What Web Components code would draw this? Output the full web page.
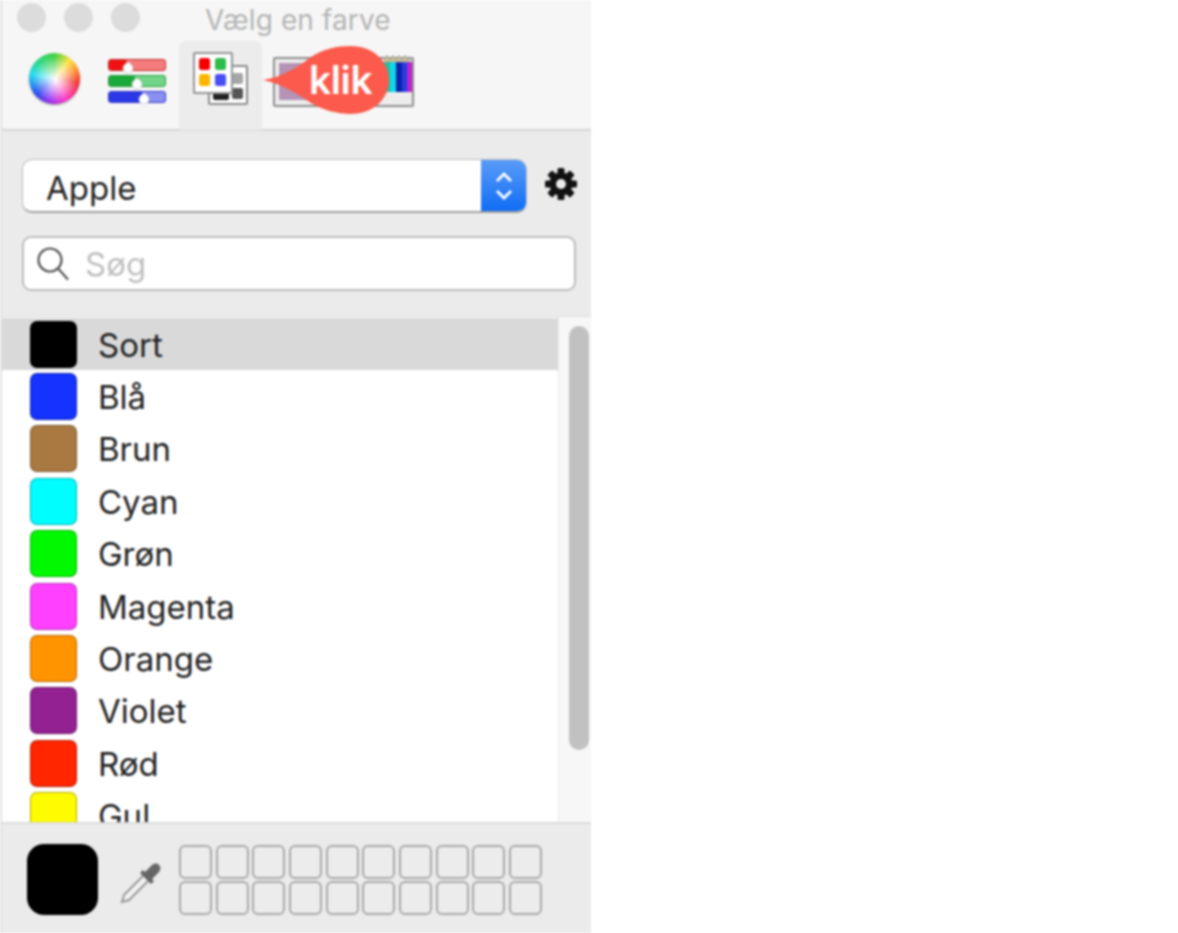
<!DOCTYPE html>
<html lang="da"><head><meta charset="utf-8"><title>Vælg en farve</title>
<style>
html,body{margin:0;padding:0;background:#fff;height:100%}
body{font-family:Inter,"Liberation Sans",sans-serif}
</style></head><body>
<color-panel>
  <title-bar slot="top">Vælg en farve</title-bar>
  <tool-bar slot="top"></tool-bar>
  <filter-area slot="filters"></filter-area>
  <color-row name="Sort" color="#000000" selected></color-row>
  <color-row name="Blå" color="#1433ff"></color-row>
  <color-row name="Brun" color="#aa7942"></color-row>
  <color-row name="Cyan" color="#00fdff"></color-row>
  <color-row name="Grøn" color="#00f900"></color-row>
  <color-row name="Magenta" color="#ff40ff"></color-row>
  <color-row name="Orange" color="#ff9300"></color-row>
  <color-row name="Violet" color="#942192"></color-row>
  <color-row name="Rød" color="#ff2600"></color-row>
  <color-row name="Gul" color="#fffb00"></color-row>
  <color-tray slot="bottom"></color-tray>
</color-panel>
<script>
function def(name,html,setup){
  customElements.define(name,class extends HTMLElement{
    connectedCallback(){
      if(this.shadowRoot)return;
      const r=this.attachShadow({mode:'open'});
      r.innerHTML=typeof html==='function'?html(this):html;
      if(setup)setup(r,this);
    }
  });
}
def('color-panel',`<style>
:host{display:flex;flex-direction:column;width:591px;height:933px;box-sizing:border-box;border-left:2px solid #e2e2e2;overflow:hidden;filter:blur(.8px)}
.list{display:flex;height:505px;flex:none}
.rows{flex:1;min-width:0;overflow:hidden;background:#fff;padding-top:1px;box-sizing:border-box}
.track{width:33px;flex:none;background:#f7f7f7;border-left:1px solid #e8e8e8;box-sizing:border-box;padding:9px 2px 0 10px}
.thumb{height:424px;background:#c1c1c1;border-radius:10px}
</style>
<slot name="top"></slot><slot name="filters"></slot>
<div class="list"><div class="rows"><slot></slot></div><div class="track"><div class="thumb"></div></div></div>
<slot name="bottom"></slot>`);
def('title-bar',`<style>
:host{display:flex;align-items:center;height:41px;background:#f6f6f6;position:relative;font:28px/1 Inter,"Liberation Sans",sans-serif;color:#b4b4b4}
.dots{display:flex;gap:18px;padding-left:15px;margin-top:-6px}
.dots i{width:29px;height:29px;border-radius:50%;background:#dcdcdc;display:block}
.t{margin-left:65px;margin-top:-2px;letter-spacing:.1px}
</style><div class="dots"><i></i><i></i><i></i></div><div class="t"><slot></slot></div>`);
def('tool-bar',`<style>
:host{display:flex;height:90px;box-sizing:border-box;background:#f6f6f6;border-bottom:2px solid #d6d6d6;position:relative;padding-left:27px;align-items:flex-start}
svg{display:block;flex:none}
.wheel{width:51px;height:51px;border-radius:50%;margin-top:12px;flex:none;background:radial-gradient(circle at 52% 52%,#fff 0,rgba(255,255,255,.75) 16%,rgba(255,255,255,0) 62%),conic-gradient(from 0deg,#45d045,#ffe23a 40deg,#ff8a2a 70deg,#f02c2c 100deg,#ff2fc0 150deg,#9a2cf0 190deg,#2a4cf0 230deg,#25dcf0 280deg,#30d880 320deg,#45d045);box-shadow:0 1px 2px rgba(0,0,0,.45)}
.sl{margin:18px 0 0 28px}
.tab{width:83px;height:89px;margin-left:13px;background:#ececec;border-radius:7px 7px 0 0;flex:none}
.img{margin:13px 0 0 11px}
.call{position:absolute;left:259px;top:3px;width:130px;height:72px}
.call span{position:absolute;left:48px;top:16px;font:600 39px/1 Inter,"Liberation Sans",sans-serif;color:#fff;letter-spacing:-.4px}
</style>
<div class="wheel"></div>
<svg class="sl" width="58" height="46" viewBox="0 0 58 46">
<rect x=".5" y=".5" width="57" height="11" rx="2.5" fill="#f47c7c" stroke="#c22a2a"/><rect x="1" y="1" width="18" height="10" rx="2" fill="#f01212"/>
<rect x=".5" y="16.500" width="57" height="11" rx="2.5" fill="#72d488" stroke="#2a9a40"/><rect x="1" y="17" width="26" height="10" rx="2" fill="#1aa83a"/>
<rect x=".5" y="32.500" width="57" height="11" rx="2.5" fill="#8a90f2" stroke="#3038c0"/><rect x="1" y="33" width="34" height="10" rx="2" fill="#2c38e6"/>
<g fill="#fff" stroke="#c4c4c4" stroke-width=".8"><path d="M15 9c0-2 2-4 5-6 3 2 5 4 5 6 0 3-2 5-5 5s-5-2-5-5z"/><path d="M24 25c0-2 2-4 5-6 3 2 5 4 5 6 0 3-2 5-5 5s-5-2-5-5z"/><path d="M31 40c0-2 2-4 5-6 3 2 5 4 5 6 0 3-2 5-5 5s-5-2-5-5z"/></g></svg>
<div class="tab"><svg width="83" height="89" viewBox="0 0 83 89">
<rect x="30" y="25" width="38" height="38" rx="1" fill="#fff" stroke="#8a8a8a" stroke-width="2"/>
<rect x="34" y="48" width="16" height="11" rx="2" fill="#222"/><rect x="53" y="32" width="11" height="11" rx="2" fill="#a5a5a5"/><rect x="53" y="47" width="11" height="11" rx="2" fill="#555"/>
<rect x="15" y="12" width="38" height="40" rx="1" fill="#fff" stroke="#949494" stroke-width="2"/>
<rect x="20" y="17" width="11" height="12" rx="2.5" fill="#f40000"/><rect x="36" y="17" width="11" height="12" rx="2.5" fill="#2dbb4a"/>
<rect x="20" y="33" width="11" height="12" rx="2.5" fill="#ffb400"/><rect x="36" y="33" width="11" height="12" rx="2.5" fill="#4a4cf5"/></svg></div>
<svg class="img" width="142" height="54" viewBox="0 0 142 54">
<rect x="1" y="4" width="139" height="48" rx="1" fill="#ececec" stroke="#8e8e8e" stroke-width="2"/>
<rect x="6" y="9" width="70" height="37" fill="#b493b5"/>
<g><rect x="111" y="8" width="6" height="30" fill="#20c0a0"/><rect x="117" y="8" width="6" height="30" fill="#0fd8e8"/><rect x="123" y="8" width="6" height="30" fill="#1020a8"/><rect x="129" y="8" width="5" height="30" fill="#2040e0"/><rect x="134" y="8" width="5" height="30" fill="#c020d0"/></g>
<path d="M111 8l3-7 3 7 3-7 3 7 3-7 3 7 3-7 3 7 2-5v5z" fill="#cfc878" stroke="#a08fb0" stroke-width=".6"/></svg>
<div class="call"><svg width="130" height="72" viewBox="0 0 130 72"><path d="M2 36C22 33 38 22 50 13C62 5 76 2 90 2C112 2 128 17 128 36C128 55 112 70 90 70C76 70 62 66 50 59C38 51 22 40 2 36Z" fill="#fb5a4c"/></svg><span>klik</span></div>`);
def('filter-area',`<style>
:host{display:flex;flex-direction:column;height:186px;box-sizing:border-box;background:#ebebeb;padding:28px 15px 0 20px;border-bottom:1px solid #e0e0e0;font:33px/1 Inter,"Liberation Sans",sans-serif;color:#222}
.top{display:flex;align-items:center;height:54px}
.sel{width:505px;height:54px;flex:none;box-sizing:border-box;display:flex;background:#fff;border:1px solid #bcbcbc;border-bottom:2px solid #a0a0a0;border-radius:10px;overflow:hidden}
.sel .v{flex:1;padding:12px 0 0 23px}
.sel .b{width:45px;background:linear-gradient(#5a9cf8,#106df5);display:flex;align-items:center;justify-content:center}
.gear{margin:-5px 0 0 17px;flex:none}
.search{margin-top:23px;height:55px;box-sizing:border-box;background:#fff;border:2px solid #bcbcbc;border-radius:9px;display:flex;align-items:center;padding-left:12px;color:#c0c0c0}
.search span{margin-left:15px;margin-top:1px}
svg{display:block}
</style>
<div class="top"><div class="sel"><div class="v">Apple</div><div class="b"><svg width="22" height="34" viewBox="0 0 22 34" fill="none" stroke="#fff" stroke-width="2.8"><path d="M4 12l7-7 7 7M4 22l7 7 7-7"/></svg></div></div>
<svg class="gear" width="34" height="34" viewBox="-17 -17 34 34"><g fill="#111"><circle r="11.500"/><rect x="-3.5" y="-16" width="7" height="32" rx="1.500"/><rect x="-3.5" y="-16" width="7" height="32" rx="1.500" transform="rotate(45)"/><rect x="-3.5" y="-16" width="7" height="32" rx="1.500" transform="rotate(90)"/><rect x="-3.5" y="-16" width="7" height="32" rx="1.500" transform="rotate(135)"/></g><circle r="5" fill="#ebebeb"/></svg></div>
<div class="search"><svg width="34" height="36" viewBox="0 0 34 36" fill="none" stroke="#555" stroke-width="2.2"><circle cx="14" cy="14" r="11.5"/><path d="M22.500 23l9 10" stroke-linecap="round"/></svg><span>Søg</span></div>`);
def('color-row',h=>`<style>
:host{display:flex;align-items:center;height:52.4px;padding-left:28px;font:33px/1 Inter,"Liberation Sans",sans-serif;color:#222;background:${h.hasAttribute('selected')?'#d9d9d9':'#fff'}}
i{display:block;width:47px;height:47px;box-sizing:border-box;border-radius:7px;background:${h.getAttribute('color')};border:1px solid rgba(0,0,0,.3);flex:none}
span{margin-left:21px;margin-top:2px}
</style><i></i><span>${h.getAttribute('name')}</span>`);
def('color-tray',`<style>
:host{display:flex;flex:1;box-sizing:border-box;background:#ebebeb;border-top:2px solid #dcdcdc;padding:20px 0 0 25px;align-items:flex-start}
.big{width:71px;height:71px;background:#000;border-radius:17px;flex:none}
svg{display:block;flex:none;margin:17px 0 0 21px}
.grid{display:grid;grid-template-columns:repeat(10,33px);grid-auto-rows:34px;gap:2px 3.67px;margin-left:16px;margin-top:1px}
.grid i{display:block;box-sizing:border-box;border:2px solid #a8a8a8;border-radius:6px;background:#ececec}
</style><div class="big"></div>
<svg width="44" height="44" viewBox="0 0 44 44"><path d="M26 13L5 34l-2 7 7-2L31 18z" fill="#f2f2f2" stroke="#9a9a9a" stroke-width="2"/><path d="M21 12l11 11 3-3-2-2 6-6c3-3 3-6 1-8s-5-2-8 1l-6 6-2-2z" fill="#666"/></svg>
<div class="grid">${'<i></i>'.repeat(20)}</div>`);
</script>
</body></html>
